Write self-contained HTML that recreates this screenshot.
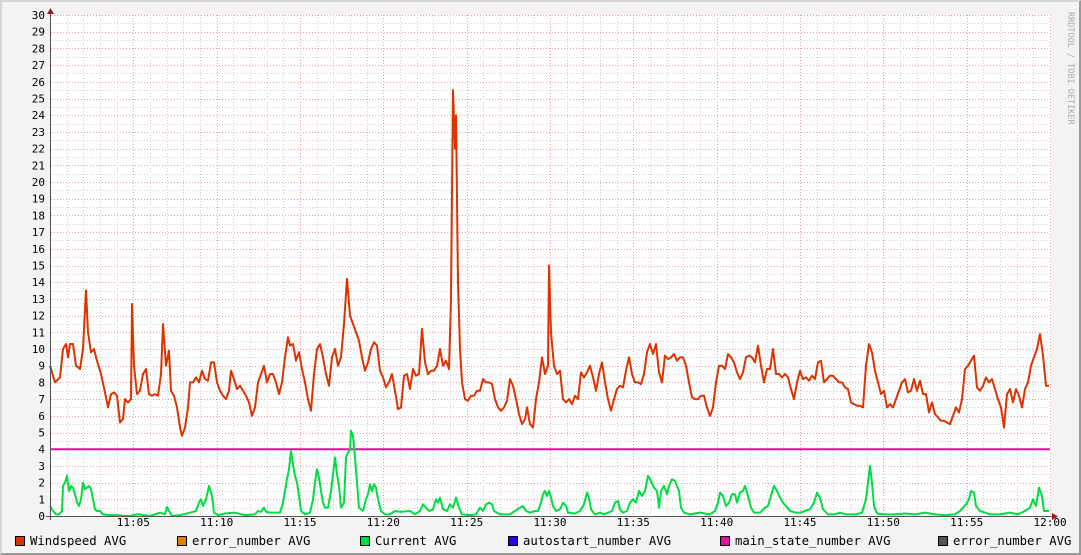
<!DOCTYPE html>
<html><head><meta charset="utf-8"><style>
html,body{margin:0;padding:0;background:#f3f3f3}
#w{position:relative;width:1081px;height:555px;box-sizing:border-box;border-top:2px solid #d6d6d6;border-left:2px solid #d6d6d6;border-right:2px solid #9a9a9a;border-bottom:2px solid #9a9a9a;background:#f3f3f3;overflow:hidden}
svg{position:absolute;left:-2px;top:-2px}
text{font-family:"DejaVu Sans Mono","Liberation Mono",monospace;font-size:11px;fill:#000}
text.lg{font-size:12.3px}
</style></head><body><div id="w">
<svg id="s" width="1081" height="555" xmlns="http://www.w3.org/2000/svg">
<rect x="51" y="15" width="1000" height="501" fill="#fff"/>
<g id="grid"></g>
<g transform="translate(0,516) scale(1,-16.7)" fill="none">
<line x1="50" y1="4" x2="1050" y2="4" stroke="#e0109a" stroke-width="2" vector-effect="non-scaling-stroke"/>
<polyline stroke="#00dd44" stroke-width="2" stroke-linejoin="round" vector-effect="non-scaling-stroke" points="50,0.6 53,0.3 56,0.1 59,0.1 62,0.3 63,1.8 65,2 67,2.4 69,1.5 71,1.8 73,1.7 75,1.3 77,0.8 79,0.6 81,1 83,2 85,1.6 87,1.7 89,1.8 91,1.6 93,1 95,0.4 97,0.3 100,0.3 103,0.1 110,0.05 117,0.05 125,0 130,0 137,0.1 140,0.1 143,0.05 150,0 160,0.2 165,0.1 167,0.55 169,0.3 172,0 180,0.05 190,0.2 196,0.3 199,0.8 201,1 203,0.6 206,1 209,1.8 212,1.2 214,0.2 218,0.05 225,0.15 235,0.2 245,0.05 255,0.1 258,0.3 261,0.25 264,0.5 266,0.25 270,0.2 280,0.2 283,0.8 285,1.5 287,2.2 289,2.8 291,3.9 293,3.1 295,2.4 297,2 299,1.2 301,0.3 305,0.1 310,0.2 313,1 315,2 317,2.8 319,2.3 321,1.5 323,0.8 325,0.5 328,0.5 331,1.5 333,2.5 335,3.5 337,2.5 339,1.8 341,0.5 344,0.8 346,3.5 348,3.8 350,4 351,5.1 353,4.8 355,3.5 357,2 359,0.5 363,0.3 366,1 368,1.3 370,1.9 372,1.5 374,1.9 376,1.7 378,1 381,0.3 385,0.1 390,0.1 395,0.3 400,0.25 410,0.3 415,0.1 420,0.3 423,0.7 426,0.5 429,0.3 433,0.4 436,1 438,0.8 440,1.1 443,0.4 447,0.3 450,0.7 453,0.5 456,1.1 459,0.5 462,0.1 470,0.05 476,0.1 480,0.5 483,0.3 486,0.7 489,0.8 492,0.7 494,0.3 500,0.1 510,0.1 515,0.3 520,0.5 523,0.6 526,0.3 530,0.2 535,0.3 538,0.3 541,0.8 543,1.3 545,1.5 547,1.2 549,1.5 551,1.1 553,0.6 556,0.3 560,0.4 563,0.8 566,0.6 568,0.2 575,0.15 580,0.3 584,0.7 587,1.4 589,1.1 591,0.4 595,0.1 600,0.2 604,0.1 608,0.2 612,0.3 615,0.8 618,0.9 620,0.4 623,0.2 627,0.3 630,0.8 633,1 636,0.8 639,1.5 642,1.2 645,1.5 648,2.4 651,2.1 654,1.7 657,1.5 659,0.5 661,1.5 664,1.8 667,1.3 669,1.8 672,2.2 675,2.1 677,1.8 679,1.5 681,0.5 684,0.2 690,0.1 700,0.2 710,0.1 715,0.3 718,0.8 720,1.4 723,1.2 726,0.6 729,0.8 732,1.3 735,1.3 737,0.8 740,1.4 743,1.5 745,1.8 748,1.2 751,0.5 754,0.2 760,0.2 765,0.5 768,0.6 771,1.2 774,1.8 777,1.5 780,1.1 783,0.8 786,0.6 790,0.3 796,0.2 800,0.2 805,0.3 810,0.4 814,0.8 817,1.4 820,1.1 823,0.4 828,0.1 835,0.1 840,0.2 846,0.1 850,0.1 856,0.1 862,0.2 866,1 868,2 870,3 872,2 874,0.6 877,0.15 885,0.1 895,0.1 905,0.15 915,0.1 925,0.2 935,0.1 945,0.05 955,0.1 960,0.3 963,0.5 966,0.7 969,1 971,1.5 974,1.4 976,0.6 980,0.3 990,0.1 1000,0.1 1010,0.2 1018,0.1 1025,0.3 1030,0.5 1033,1 1036,0.6 1039,1.7 1042,1.2 1044,0.3 1049,0.3"/>
<polyline stroke="#dd3300" stroke-width="2" stroke-linejoin="round" vector-effect="non-scaling-stroke" points="50,9 55,8 60,8.3 63,10 66,10.3 68,9.5 70,10.3 73,10.3 76,9 80,8.8 83,10 86,13.5 88,11 91,9.8 94,10 97,9.3 101,8.5 105,7.4 108,6.5 111,7.3 114,7.4 117,7.2 120,5.6 123,5.8 125,7 128,6.8 131,7 132,12.7 134,9 137,7.3 140,7.5 143,8.5 146,8.8 149,7.3 152,7.2 155,7.3 158,7.2 161,8.5 163,11.5 166,9 169,9.9 171,7.5 174,7.2 177,6.5 180,5.3 182,4.8 185,5.3 188,6.5 190,8 193,8 196,8.3 199,8 202,8.7 205,8.2 208,8.1 211,9.2 214,9.2 217,8 220,7.5 223,7.2 226,7 229,7.5 231,8.7 234,8.2 237,7.6 240,7.8 243,7.5 246,7.2 249,6.8 252,6 255,6.5 258,8 261,8.5 264,9 267,8 270,8.5 273,8.5 276,8 279,7.3 282,8 285,9.5 288,10.7 290,10.2 293,10.3 296,9.3 299,9.8 302,8.8 305,8 308,7 311,6.3 314,8.5 317,10 320,10.3 323,9.5 326,8.5 329,7.8 332,9.5 335,10 338,9 341,9.5 344,11.5 347,14.2 350,12 353,11.5 356,11 359,10.5 362,9.5 365,8.7 368,9.2 371,10 374,10.4 377,10.2 380,8.7 383,8.3 386,7.7 389,8 392,8.5 395,7.5 398,6.4 401,6.5 404,8.4 407,8.5 410,7.6 413,8.8 416,8.4 419,8.5 422,11.2 425,9.2 428,8.5 431,8.7 434,8.7 437,9 440,10 443,9 446,9.3 449,8.8 451,13 453,25.5 455,22 456,24 458,14 460,10 462,8 465,7 468,6.9 471,7.2 474,7.2 477,7.5 480,7.5 483,8.2 486,8 489,8 492,7.9 495,7 498,6.5 501,6.3 504,6.5 507,6.9 510,8.2 513,7.8 516,7 519,6.1 522,5.5 525,5.8 527,6.5 530,5.5 533,5.3 536,7 539,8 542,9.5 545,8.5 548,9 549,15 551,11 554,9 557,8.5 560,8.7 563,7 566,6.8 569,7 572,6.7 575,7.2 578,7 581,8.6 584,8.3 587,8.6 590,9 593,8.3 596,7.5 599,8.5 602,9.2 605,8 608,7 611,6.3 614,7 617,7.6 620,7.8 623,7.7 626,8.7 629,9.5 632,8.5 635,8 638,8 641,7.9 644,8.5 647,9.8 650,10.3 653,9.7 656,10.3 659,8.6 662,8 665,9.6 668,9.4 671,9.5 674,9.7 677,9.3 680,9.5 683,9.5 686,9 689,8 692,7.1 695,7 698,7 701,7.2 704,7.2 707,6.5 710,6 713,6.5 716,8 719,9 722,9 725,8.8 728,9.7 731,9.5 734,9.2 737,8.6 740,8.2 743,8.6 746,9.5 749,9.6 752,9.5 755,9.2 758,10.2 761,9 764,8 767,8.8 770,8.8 773,10 776,8.5 779,8.5 782,8.3 785,8.5 788,8.3 791,7.6 794,7 797,8 800,8.7 803,8.2 806,8.3 809,8.1 812,8.4 815,8.2 818,9.2 821,9.3 824,8 827,8.2 830,8.4 833,8.4 836,8.2 839,8 842,8 845,7.7 848,7.6 851,6.8 854,6.7 857,6.6 860,6.6 863,6.5 866,9 869,10.3 872,9.8 875,8.7 878,8 881,7.3 884,7.5 887,6.5 890,6.7 893,6.5 896,7 899,7.5 902,8 905,8.2 908,7.4 911,7.5 914,8.2 917,7.5 920,8.1 923,7.3 926,7.3 929,6.2 932,6.8 935,6.1 938,5.9 941,5.7 944,5.7 947,5.6 950,5.5 953,6 956,6.5 959,6.2 962,7 965,8.8 968,9 971,9.3 974,9.6 977,7.7 980,7.5 983,7.8 986,8.3 989,8 992,8.2 995,7.6 998,7 1001,6.5 1004,5.3 1007,7.3 1010,7.6 1013,6.8 1016,7.6 1019,7.2 1022,6.5 1025,7.6 1028,8 1031,9 1034,9.5 1037,10 1040,10.9 1043,9.6 1046,7.8 1049,7.8"/>
</g>
<g id="lab"></g>
<line x1="50.5" y1="10" x2="50.5" y2="520" stroke="#555" stroke-width="1"/>
<line x1="46" y1="516.5" x2="1054" y2="516.5" stroke="#555" stroke-width="1"/>
<polygon points="47,14 54,14 50.5,8" fill="#9b1b1b"/>
<polygon points="1052,513 1052,520 1058,516.5" fill="#9b1b1b"/>
<text x="1068" y="12" transform="rotate(90 1068 12)" style="font-size:8.5px;fill:#aaa">RRDTOOL / TOBI OETIKER</text>
<rect x="15.5" y="536.5" width="9" height="9" fill="#dd3300" stroke="#000"/><text class="lg" x="30" y="545">Windspeed AVG</text>
<rect x="177.5" y="536.5" width="9" height="9" fill="#e08000" stroke="#000"/><text class="lg" x="192" y="545">error_number AVG</text>
<rect x="360.5" y="536.5" width="9" height="9" fill="#00dd44" stroke="#000"/><text class="lg" x="375" y="545">Current AVG</text>
<rect x="508.5" y="536.5" width="9" height="9" fill="#2200ee" stroke="#000"/><text class="lg" x="523" y="545">autostart_number AVG</text>
<rect x="720.5" y="536.5" width="9" height="9" fill="#e0109a" stroke="#000"/><text class="lg" x="735" y="545">main_state_number AVG</text>
<rect x="938.5" y="536.5" width="9" height="9" fill="#555" stroke="#000"/><text class="lg" x="953" y="545">error_number AVG</text>
</svg>
<script>
var ns="http://www.w3.org/2000/svg",g=document.getElementById("grid"),lab=document.getElementById("lab");
function L(x1,y1,x2,y2,c){var l=document.createElementNS(ns,"line");l.setAttribute("x1",x1);l.setAttribute("y1",y1);l.setAttribute("x2",x2);l.setAttribute("y2",y2);l.setAttribute("stroke",c);l.setAttribute("stroke-dasharray","1,2");l.setAttribute("stroke-width","1");g.appendChild(l);}
function T(x,y,s,a){var t=document.createElementNS(ns,"text");t.setAttribute("x",x);t.setAttribute("y",y);t.setAttribute("text-anchor",a);t.textContent=s;lab.appendChild(t);}
for(var i=1;i<=60;i++){var y=Math.round(516-i*8.35)+0.5;L(51,y,1050,y,i%2?"#d0d0d0":"#e8a0a0");}
for(var i=1;i<=60;i++){var x=Math.round(50+i*16.667)+0.5;L(x,15,x,516,i%5?"#d0d0d0":"#e8a0a0");}
for(var v=0;v<=30;v++){T(45,516-v*16.7+4,""+v,"end");}
for(var m=5;m<=60;m+=5){var h=m==60?"12:00":"11:"+(m<10?"0"+m:m);T(50+m*16.667,526,h,"middle");}
</script>
</div></body></html>
